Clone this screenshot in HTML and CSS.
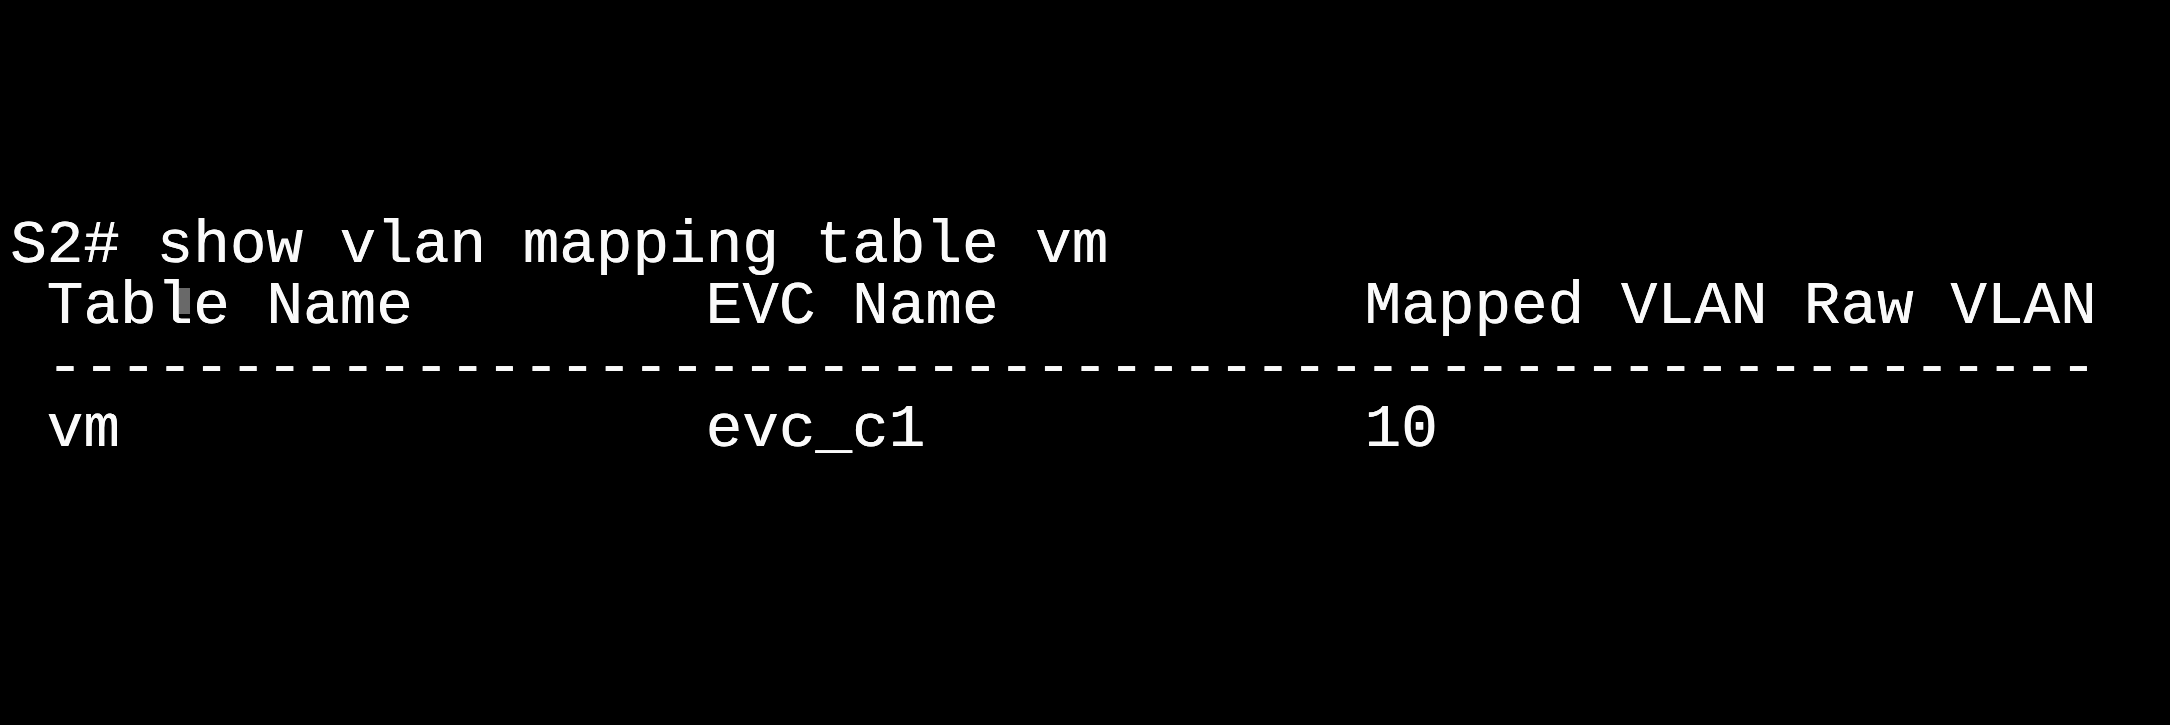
FILE: index.html
```html
<!DOCTYPE html>
<html>
<head>
<meta charset="utf-8">
<link rel="stylesheet" href="styles.css">
</head>
<body>
<main class="terminal">
<pre class="screen"><span class="line">S2# show vlan mapping table vm</span>
<span class="line"> Ta<span class="cursor-cell">b</span>le Name        EVC Name          Mapped VLAN Raw VLAN</span>
<span class="line"> --------------------------------------------------------</span>
<span class="line"> vm                evc_c1            10</span></pre>
</main>
</body>
</html>
```

FILE: styles.css
```css
html, body {
  margin: 0;
  padding: 0;
  background: #000;
  width: 2170px;
  height: 725px;
  overflow: hidden;
}

.terminal {
  padding: 215px 0 0 10px;
  box-sizing: border-box;
  height: 725px;
  background: #000;
}

.screen {
  margin: 0;
  font-family: "Liberation Mono", "DejaVu Sans Mono", monospace;
  font-size: 61px;
  line-height: 61.3px;
  color: #fafafa;
  white-space: pre;
  text-shadow: 0.4px 0 0 #fafafa;
}

.line {
  display: inline;
}

.cursor-cell {
  position: relative;
}

.cursor-cell::after {
  content: "";
  position: absolute;
  left: 59px;
  top: 16px;
  width: 11px;
  height: 26px;
  background: rgba(140, 140, 140, 0.75);
}
```
